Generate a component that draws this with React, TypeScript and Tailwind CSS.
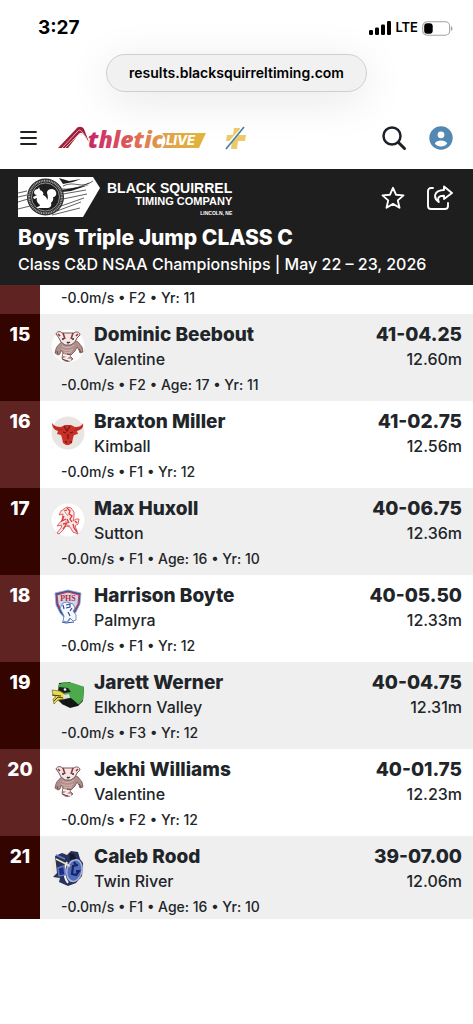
import React from 'react';

interface Result {
  place: number;
  name: string;
  school: string;
  mark: string;
  metric: string;
  details: string;
  logo: React.ReactNode;
}

function BadgerLogo() {
  return (
    <svg viewBox="0 0 36 36" className="h-9 w-9" aria-hidden="true">
      <circle cx="18" cy="18" r="16.5" fill="#fdfcfc" />
      <path d="M12 14c-3 2-5 4-6 7l-1 4 3 2 2-1 1-4 2 3-1 5c1 3 5 4 8 3l3-2-3-3 5-5 2-4 2 3 1 3 3-1-1-5-4-5-4-2z" fill="#b18f8b" stroke="#6d5051" strokeWidth=".8" />
      <path d="M6 6c1-3 5-3 6-1h12c2-2 6-1 6 2l-3 3-2 4-4 3h-6l-4-3-2-4z" fill="#f1e7e5" stroke="#78595b" strokeWidth="1" />
      <path d="M13 5l2 6M23 5l-2 6M8 6l2 2M28 6l-2 2" stroke="#9b3038" strokeWidth="1.600" />
      <path d="M12 11h2M22 11h2M17 14l1 1 2-1" stroke="#332a2c" strokeWidth="1.300" fill="none" />
      <path d="M12 18c3 2 9 2 12-1M11 21c4 2 9 2 12 0M14 24c3 1 6 1 8-1" stroke="#d5bbb7" strokeWidth=".9" fill="none" />
      <path d="M13 27l6 1-5 3 7 1" stroke="#f8efed" strokeWidth="1.800" fill="none" />
      <path d="M17 26l4 1M12 31l6 2M7 23l1 3M29 21l2 3" stroke="#803c42" strokeWidth="1" />
    </svg>
  );
}

function LonghornLogo() {
  return (
    <svg viewBox="0 0 36 36" className="h-9 w-9" aria-hidden="true">
      <circle cx="18" cy="18" r="16.5" fill="#e8e5e2" />
      <path d="M2 8c2 3 5 4 9 4l4-2h6l4 2c4 0 7-1 8-4 1 5-2 7-6 8l1 3-4 1-1 3-1 5-3 2h-3l-3-2-1-5-1-3-4-1 1-3C4 15 2 12 2 8z" fill="#cb2f25" />
      <path d="M13 17l3 1M23 17l-3 1M14 11l3 5 3-5M15 27h2M20 27h2M18 19v5" stroke="#6b1b18" strokeWidth="1.300" fill="none" />
      <path d="M4 11l4 3 4 1M32 11l-4 3-4 1" stroke="#9c251f" strokeWidth=".8" fill="none" />
    </svg>
  );
}

function MustangLogo() {
  return (
    <svg viewBox="0 0 36 36" className="h-9 w-9" aria-hidden="true">
      <circle cx="18" cy="18" r="16.5" fill="#fff" />
      <path d="M11 9l6-4 4 1 3 4v5l-1 4 3-2h3l-1 5-3 2 2 5 1 3-5-2-3-5-4-1-3 4-4 4-2-1 4-5 1-3-5 1 5-6 1-6-4 1z" fill="#fbe7e6" stroke="#dc6263" strokeWidth="1" />
      <path d="M17 6l3 3-1 3 3 2-2 3 2 3M14 14l-2 5 4-2M13 22l4-1-4 6M23 22l1 4 3 4M25 19l2 2M14 9l3-1M17 17l2 4" stroke="#d83b3d" strokeWidth="1.300" fill="none" />
      <path d="M15 10l3 4M18 18l-3 2M20 24l-3-1" stroke="#8c7476" strokeWidth=".7" />
    </svg>
  );
}

function ShieldLogo() {
  return (
    <svg viewBox="0 0 36 36" className="h-9 w-9" aria-hidden="true">
      <path d="M5 4l13-3 13 3-1 11-4 8-8 10-8-9-4-8z" fill="#3154a0" stroke="#9daed0" strokeWidth=".8" />
      <path d="M7 6l11-3 11 3-1 9-4 7-6 7-7-8-3-6z" fill="#cbd7ec" stroke="#d33c43" strokeWidth="1.200" />
      <text x="18" y="12" textAnchor="middle" fontSize="8" fontWeight="700" fontFamily="'Liberation Serif', serif" fill="#c72635">PHS</text>
      <path d="M13 14l4-1 6 2 2 4-2 3 3 4v5l-3 1-3-3-3 4-4-1 1-5-2-4-2-4z" fill="#f6f9ff" stroke="#6683ba" strokeWidth=".9" />
      <path d="M16 16l4-1v3l-4 1M18 23l2 4M13 16l1 4M22 19l-2 3" stroke="#304e91" strokeWidth="1.200" fill="none" />
      <path d="M12 33l4 1 8-1" stroke="#3155a1" strokeWidth="1.200" fill="none" />
    </svg>
  );
}

function FalconLogo() {
  return (
    <svg viewBox="0 0 36 36" className="h-9 w-9" aria-hidden="true">
      <path d="M9 7l10-1 8 3 7 2-1 14-5 5-8 2-8-4-5-5z" fill="#171e18" />
      <path d="M9 8l8-2 9 2 8 3-1 13-5 5-4-4-6-4-6-5-4-4z" fill="#4caa4d" />
      <path d="M2 14l8 1 6 4-1 4-7 1-4 4-1-5 3-2-3-2z" fill="#eadb45" stroke="#71682c" strokeWidth=".7" />
      <path d="M2 19l9 1M4 25l4-4 5 1" stroke="#302d1d" strokeWidth=".9" fill="none" />
      <path d="M9 11l9 1 3 4-7 1-5-3z" fill="#19221c" />
      <circle cx="15" cy="13.500" r="1.300" fill="#f7f7f1" />
      <path d="M13 19l6-1 1 4-6 1z" fill="#dce0df" />
      <path d="M14 24l7-2 8 7-9 2-8-3z" fill="#121713" />
    </svg>
  );
}

function TitanLogo() {
  return (
    <svg viewBox="0 0 36 36" className="h-9 w-9" aria-hidden="true">
      <circle cx="18" cy="18" r="16.5" fill="#eee9dc" />
      <path d="M5 6l7-3 5 2 4-4 7 1 2 7 3 4-1 13-6 7-8 3-9-4 1-4-7-1 4-4-1-9z" fill="#26315d" />
      <ellipse cx="24.500" cy="20.500" rx="7.500" ry="11" transform="rotate(12 24 20)" fill="#526cbc" stroke="#a9b7dc" strokeWidth="1.500" />
      <path d="M17 12c-4 7-3 16 1 21" stroke="#f4f5f8" strokeWidth="2" fill="none" />
      <path d="M6 9l14 7" stroke="#f1e4aa" strokeWidth="1.500" />
      <path d="M6 5l9 4M8 18l6-2 1 9-6 1z" stroke="#647bc0" strokeWidth="1.500" fill="#1d2d83" />
      <path d="M28 15l-5 1-1 8 4 1 3-4h-3M24 12l2 3" stroke="#152565" strokeWidth="2.200" fill="none" />
      <path d="M19 3l5 1 2 5-6 1z" fill="#161b2d" />
    </svg>
  );
}

const results: Result[] = [
  { place: 15, name: 'Dominic Beebout', school: 'Valentine', mark: '41-04.25', metric: '12.60m', details: '-0.0m/s • F2 • Age: 17 • Yr: 11', logo: <BadgerLogo /> },
  { place: 16, name: 'Braxton Miller', school: 'Kimball', mark: '41-02.75', metric: '12.56m', details: '-0.0m/s • F1 • Yr: 12', logo: <LonghornLogo /> },
  { place: 17, name: 'Max Huxoll', school: 'Sutton', mark: '40-06.75', metric: '12.36m', details: '-0.0m/s • F1 • Age: 16 • Yr: 10', logo: <MustangLogo /> },
  { place: 18, name: 'Harrison Boyte', school: 'Palmyra', mark: '40-05.50', metric: '12.33m', details: '-0.0m/s • F1 • Yr: 12', logo: <ShieldLogo /> },
  { place: 19, name: 'Jarett Werner', school: 'Elkhorn Valley', mark: '40-04.75', metric: '12.31m', details: '-0.0m/s • F3 • Yr: 12', logo: <FalconLogo /> },
  { place: 20, name: 'Jekhi Williams', school: 'Valentine', mark: '40-01.75', metric: '12.23m', details: '-0.0m/s • F2 • Yr: 12', logo: <BadgerLogo /> },
  { place: 21, name: 'Caleb Rood', school: 'Twin River', mark: '39-07.00', metric: '12.06m', details: '-0.0m/s • F1 • Age: 16 • Yr: 10', logo: <TitanLogo /> },
];

function StatusBar() {
  return (
    <div className="flex h-[54px] items-center justify-between pt-0.5 pr-5 pl-[38px] text-black">
      <span className="text-[19px] font-bold">3:27</span>
      <div className="flex items-center gap-1">
        <svg viewBox="0 0 22 14" className="h-3.5 w-[22px]" aria-hidden="true">
          <rect x="0" y="9" width="4" height="5" rx="1.200" />
          <rect x="6" y="6.500" width="4" height="7.500" rx="1.200" />
          <rect x="12" y="3.500" width="4" height="10.500" rx="1.200" />
          <rect x="18" y="0" width="4" height="14" rx="1.200" />
        </svg>
        <span className="text-[13px] font-semibold">LTE</span>
        <svg viewBox="0 0 31 15" className="h-[15px] w-[31px]" aria-hidden="true">
          <rect x=".7" y=".7" width="27" height="13.500" rx="4.500" fill="none" stroke="#a3a3a3" strokeWidth="1.100" />
          <path d="M29 5.200c2 .6 2 4 0 4.600z" fill="#a3a3a3" />
          <rect x="2.200" y="2.200" width="8.500" height="10.500" rx="3" />
        </svg>
      </div>
    </div>
  );
}

function AthleticLogo() {
  return (
    <svg viewBox="0 -8 150 42" className="h-[42px] w-[150px]" role="img" aria-label="AthleticLIVE">
      <defs>
        <linearGradient id="word" gradientUnits="userSpaceOnUse" x1="0" x2="150" y1="0" y2="0">
          <stop offset="0" stopColor="#8d1834" />
          <stop offset=".25" stopColor="#c92e68" />
          <stop offset=".48" stopColor="#de5c57" />
          <stop offset=".7" stopColor="#e0a049" />
          <stop offset="1" stopColor="#e2b63c" />
        </linearGradient>
      </defs>
      <path d="M1 23L19 4c2-3 6-3 8 0l5 13-5-7c-2-3-4-3-6 0L11 23z" fill="#9c2039" />
      <path d="M5 23L20 7c2-3 4-2 6 1l4 6M8 23L21 10c1-1 3-1 4 0" fill="none" stroke="#f4cbd3" strokeWidth=".8" />
      <text x="31" y="23" fontSize="23" fontWeight="800" fontStyle="italic" fontFamily="'Open Sans', sans-serif" fill="url(#word)">thletic</text>
      <path d="M105 8h44l-7 15h-37c4-4 5-10 0-15z" fill="url(#word)" />
      <text x="109" y="20" fontSize="13" fontWeight="800" fontStyle="italic" fontFamily="Inter, sans-serif" fill="#fff">LIVE</text>
    </svg>
  );
}

function SiteNav() {
  return (
    <nav className="flex h-[63px] items-center justify-between pr-5 pl-5">
      <div className="flex items-center">
        <button type="button" aria-label="Menu">
          <svg viewBox="0 0 17 16" className="h-4 w-[17px]" fill="none" stroke="#1c2027" strokeWidth="1.800" strokeLinecap="round">
            <path d="M1 2h15M1 8h15M1 14h15" />
          </svg>
        </button>
        <a href="#home" className="ml-5">
          <AthleticLogo />
        </a>
        <a href="#plus" className="ml-4" aria-label="AthleticLIVE plus">
          <svg viewBox="0 0 25 26" className="h-[26px] w-[25px]">
            <path d="M11 3h6l-1 7h7l-1 6h-7l-1 8H8l1-8H3l1-6h6z" fill="#edca68" />
            <path d="M2 23L21 2" stroke="#fff" strokeWidth="3" />
            <path d="M3 24L21 2" stroke="#487fa5" strokeWidth="1.700" />
          </svg>
        </a>
      </div>
      <div className="flex items-center gap-[22px]">
        <button type="button" aria-label="Search">
          <svg viewBox="0 0 26 26" className="h-[26px] w-[26px]" fill="none" stroke="#1c2027">
            <circle cx="11" cy="11" r="8.500" strokeWidth="2.500" />
            <path d="M17.500 17.500l6 6" strokeWidth="3" strokeLinecap="round" />
          </svg>
        </button>
        <button type="button" aria-label="Account">
          <svg viewBox="0 0 24 24" className="h-6 w-6">
            <circle cx="12" cy="12" r="11.700" fill="#5288b2" />
            <circle cx="12" cy="8.800" r="3.400" fill="#fff" />
            <path d="M5.800 17.600c1.600-4.200 10.800-4.200 12.400 0-2.500 3.800-9.900 3.800-12.400 0z" fill="#fff" />
          </svg>
        </button>
      </div>
    </nav>
  );
}

function SquirrelLogo() {
  return (
    <div className="flex items-start gap-[7px]" role="img" aria-label="Black Squirrel Timing Company, Lincoln, NE">
      <svg viewBox="0 0 82 41" className="h-[41px] w-[82px]">
        <path d="M0 0h75l7 11-17 29H0z" fill="#fff" />
        <path d="M45 9c12-6 18 4 30-5M44 12c12 1 20-3 27-6M45 17l23-4M45 22l24-5M43 29l23-8M39 34l24-9M34 38l28-7M0 16l9-2M0 20l9-2M0 25l10-3M0 32l12-3" fill="none" stroke="#1e1e1e" strokeWidth=".7" />
        <path d="M41 1l10 3 12-2-8 3-10 2zM44 13l27-5-18 6-9 1z" fill="#1e1e1e" />
        <circle cx="27.500" cy="20" r="18.500" fill="#292929" />
        <circle cx="27.500" cy="20" r="16.300" fill="none" stroke="#a6a6a6" strokeWidth="2" strokeDasharray="1 .7" />
        <circle cx="27.500" cy="20" r="14" fill="#1e1e1e" stroke="#ddd" strokeWidth=".6" />
        <path d="M16 15c1-3 3-3 4-3l1-2 1 3c3 1 4 3 3 5 3 1 4 3 4 5 2-3 0-5 0-8 1-4 8-4 9 0 1 3-1 5-3 5 1 3-1 5-2 6 1 3-1 5-4 5H19c0-2 3-1 3-3-3-2-4-5-3-7l-3 1-1-2 4-2c-2 0-3-1-3-3z" fill="#fff" />
      </svg>
      <div className="mt-1 text-right font-['Liberation_Sans',Arial,sans-serif] font-bold">
        <div className="text-sm leading-[14px]">BLACK SQUIRREL</div>
        <div className="text-[11px] leading-3">TIMING COMPANY</div>
        <div className="mt-1 text-[5px] leading-none">LINCOLN, NE</div>
      </div>
    </div>
  );
}

function EventHeader() {
  return (
    <header className="bg-[#1e1e1e] pt-2 pr-5 pb-[9px] pl-[18px] text-white">
      <div className="flex justify-between">
        <SquirrelLogo />
        <div className="flex items-center gap-[22px]">
          <button type="button" aria-label="Favorite">
            <svg viewBox="0 0 24 24" className="h-6 w-6" fill="none" stroke="currentColor" strokeWidth="1.900" strokeLinejoin="round">
              <path d="M12 1.800l3 6.900 7.500.7-5.700 5 1.700 7.400-6.500-3.900-6.500 3.900 1.700-7.400-5.700-5L9 8.700z" />
            </svg>
          </button>
          <button type="button" aria-label="Share">
            <svg viewBox="0 0 26 26" className="h-[26px] w-[26px]" fill="none" stroke="currentColor" strokeWidth="1.900" strokeLinecap="round" strokeLinejoin="round">
              <path d="M6 3H4a3 3 0 0 0-3 3v15a3 3 0 0 0 3 3h14a3 3 0 0 0 3-3v-3" />
              <path d="M17 1.500l8 6.500-8 6v-3.300c-5-.2-7 2-5.200 6.300-6-4.500-5-11.700 5.200-12z" />
            </svg>
          </button>
        </div>
      </div>
      <h1 className="mt-1.5 text-[21px] leading-7 font-extrabold">Boys Triple Jump CLASS C</h1>
      <p className="text-base leading-6 font-medium">Class C&amp;D NSAA Championships | May 22 – 23, 2026</p>
    </header>
  );
}

function ResultRow({ result }: { result: Result }) {
  return (
    <tr className="group align-top odd:bg-[#5f2422] even:bg-[#330400]">
      <th scope="row" className="w-10 pt-[9px] text-[19px] leading-6 font-extrabold text-white">
        {result.place}
      </th>
      <td className="pt-[9px] pb-1.5 group-odd:bg-white group-even:bg-[#efefef] group-last:pb-0.5">
        <div className="flex items-start gap-2 pl-2.5">
          <div className="mt-[5px]">{result.logo}</div>
          <div>
            <div className="text-[19px] leading-6 font-extrabold">{result.name}</div>
            <div className="text-base leading-6 font-medium">{result.school}</div>
          </div>
        </div>
        <div className="mt-1 pl-[21px] text-sm leading-5 font-medium">{result.details}</div>
      </td>
      <td className="pt-[9px] pr-[11px] text-right group-odd:bg-white group-even:bg-[#efefef]">
        <div className="text-[19px] leading-6 font-extrabold">{result.mark}</div>
        <div className="text-base leading-6 font-medium">{result.metric}</div>
      </td>
    </tr>
  );
}

export default function App() {
  return (
    <div className="min-h-screen overflow-hidden bg-white font-['Inter',sans-serif] text-[#212529]">
      <StatusBar />
      <div className="flex justify-center pb-3.5">
        <div className="rounded-full border border-[#cfcfcf] bg-[#f1f1f1] px-[22px] py-[7px] text-sm leading-[22px] font-semibold text-black shadow-[0_8px_44px_rgba(0,0,0,0.1)]">
          results.blacksquirreltiming.com
        </div>
      </div>
      <SiteNav />
      <EventHeader />
      <table className="w-full border-collapse">
        <tbody>
          <tr className="bg-[#5f2422]">
            <td className="w-10" />
            <td colSpan={2} className="bg-white pt-[3px] pb-1.5 pl-[21px] text-sm leading-5 font-medium">
              -0.0m/s • F2 • Yr: 11
            </td>
          </tr>
          {results.map((result) => (
            <ResultRow key={result.place} result={result} />
          ))}
        </tbody>
      </table>
    </div>
  );
}
